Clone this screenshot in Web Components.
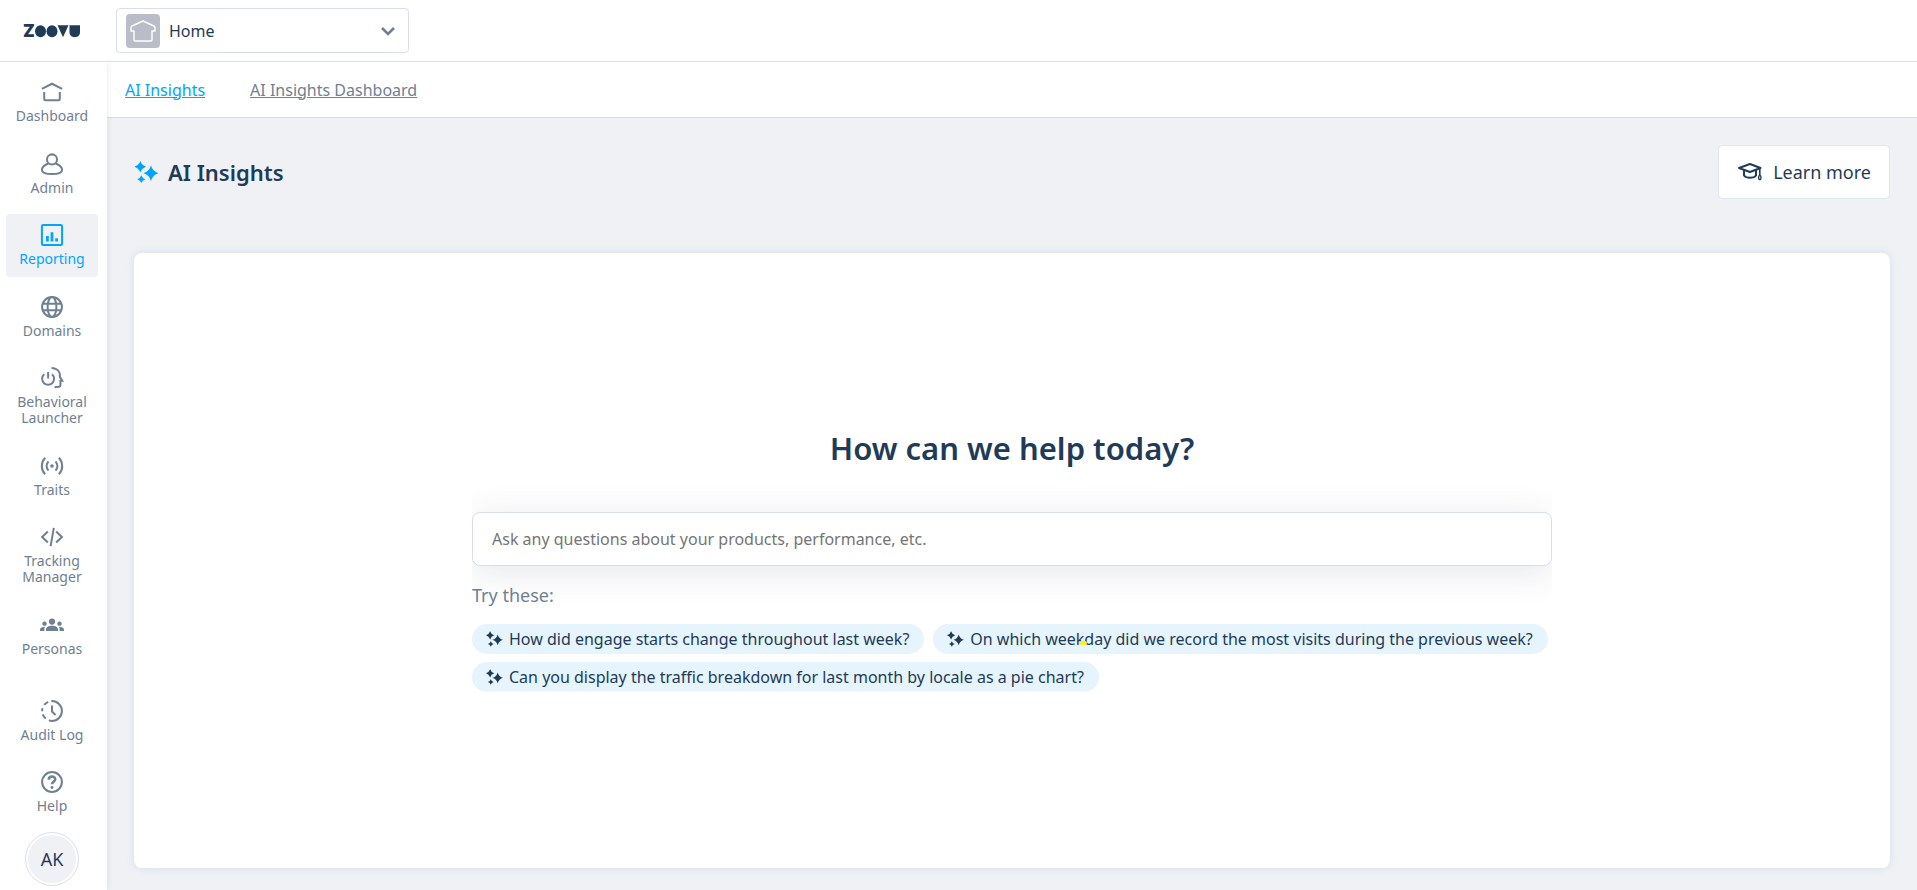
<!DOCTYPE html>
<html lang="en">
<head>
<meta charset="utf-8">
<title>AI Insights</title>
<style>
  html {
    --ink: #1f3b57;
    --muted: #6f8093;
    --accent: #00a5ff;
    --line: #dadeea;
    --surface: #eff1f5;
    --chip: #e5f4fd;
  }
  body {
    margin: 0;
    font-family: "Noto Sans", "Open Sans", sans-serif;
    font-size: 16px;
    color: var(--ink);
  }
</style>
</head>
<body>
<app-shell>
  <top-bar slot="header"></top-bar>
  <side-nav slot="nav">
    <nav-item icon="home">Dashboard</nav-item>
    <nav-item icon="user">Admin</nav-item>
    <nav-item icon="chart" active>Reporting</nav-item>
    <nav-item icon="globe">Domains</nav-item>
    <nav-item icon="launcher">Behavioral Launcher</nav-item>
    <nav-item icon="signal">Traits</nav-item>
    <nav-item icon="code">Tracking Manager</nav-item>
    <nav-item icon="group">Personas</nav-item>
    <nav-item slot="bottom" icon="clock">Audit Log</nav-item>
    <nav-item slot="bottom" icon="help">Help</nav-item>
    <user-avatar slot="bottom">AK</user-avatar>
  </side-nav>
  <tab-bar>
    <tab-link active>AI Insights</tab-link>
    <tab-link>AI Insights Dashboard</tab-link>
  </tab-bar>
  <page-title>AI Insights
    <learn-button slot="action">Learn more</learn-button>
  </page-title>
  <ask-card heading="How can we help today?">
    <prompt-chip>How did engage starts change throughout last week?</prompt-chip>
    <prompt-chip marked>On which weekday did we record the most visits during the previous week?</prompt-chip>
    <prompt-chip>Can you display the traffic breakdown for last month by locale as a pie chart?</prompt-chip>
  </ask-card>
</app-shell>

<script>
const icons = {
  home: '<path d="M1 8.500 12 3l11 5.500M3.500 12v7.500q0 1.500 1.500 1.500h14q1.500 0 1.500-1.500V12"/>',
  user: '<circle cx="12" cy="7" r="5.500"/><path d="M8 11.500c-4 1.500-7 4-7 7 0 3 4.500 4.500 11 4.500s11-1.500 11-4.500c0-3-3-5.500-7-7"/>',
  chart: '<rect x="1" y="1" width="22" height="22" rx="1.500"/><path stroke-width="3" d="M7 13v6M12 9v10M17 15.500V19"/>',
  globe: '<circle cx="12" cy="12" r="10.800"/><ellipse cx="12" cy="12" rx="4.800" ry="10.800"/><path d="M2 8.500h20M2 15.500h20"/>',
  launcher: '<path d="M3.500 8a6.500 6.500 0 1 0 8.500 0M7.800 5.500v7M11.500 1c5 0 8.500 3 9 6.500l.2 3.500 2.500 4h-2v5q0 1.500-1.500 1.500l-5 .5"/>',
  signal: '<circle cx="12" cy="12" r="2" fill="currentColor" stroke="none"/><path d="M8.200 7a7 7 0 0 0 0 10M15.800 7a7 7 0 0 1 0 10M4.500 3a13 13 0 0 0 0 18M19.500 3a13 13 0 0 1 0 18"/>',
  code: '<path d="M7.500 6 1.200 12l6.300 6M16.500 6l6.300 6-6.300 6M14 2l-3.500 20"/>',
  group: '<g fill="currentColor" stroke="none"><circle cx="12" cy="8.300" r="3.400"/><circle cx="3.800" cy="10.500" r="2.400"/><circle cx="20.200" cy="10.500" r="2.400"/><path d="M5.500 18.500v-2c0-2 2.500-3.700 6.500-3.700s6.500 1.700 6.500 3.700v2zM-1 18.500v-1.800c0-1.700 2-2.900 5.400-2.900-.5.800-.7 1.800-.7 2.700v2zM25 18.500v-1.800c0-1.700-2-2.900-5.400-2.900.5.800.7 1.800.7 2.700v2z"/></g>',
  clock: '<path d="M12 1.200a10.800 10.800 0 0 1 0 21.600"/><path d="M12 22.800a10.800 10.800 0 0 1 0-21.600" stroke-dasharray="3.500 4 5.500 3.500"/><path d="M12 6v6.500l3.800 3.800"/>',
  help: '<circle cx="12" cy="12" r="10.800"/><path stroke-width="2.800" d="M8.500 9.500c0-4.500 7-4.500 7-.5 0 2.800-3.500 2.600-3.500 5.500"/><circle cx="12" cy="18" r="1.600" fill="currentColor" stroke="none"/>'
};

const sparkle = `<svg viewBox="0 0 24 22" fill="currentColor" aria-hidden="true">
  <path d="M16.500 4.500q1.700 6 7.500 7.700-5.800 1.700-7.500 7.700-1.700-6-7.500-7.700 5.800-1.700 7.500-7.700zM5.800 0q1.400 4.300 5.800 5.800-4.400 1.400-5.800 5.800Q4.300 7.200 0 5.800 4.300 4.300 5.800 0zM6.800 14.300q1 3 4 3.900-3 .9-4 3.800-1-2.900-4-3.800 3-.9 4-3.900z"/>
</svg>`;

// shared base: clones the class template into an open shadow root
class BaseElement extends HTMLElement {
  constructor() {
    super();
    const tpl = document.createElement('template');
    tpl.innerHTML = this.constructor.html;
    this.attachShadow({mode: 'open'});
    this.shadowRoot.appendChild(tpl.content.cloneNode(true));
  }
}

class AppShell extends BaseElement {
  static html = `
    <style>
      :host {
        display: grid;
        grid-template-columns: 107px minmax(0, 1fr);
        grid-template-rows: auto 1fr;
        min-height: 100vh;
      }
      header { grid-column: 1 / -1; }
      aside {
        display: flex;
        background: #fff;
        box-shadow: 0 0 6px rgba(40, 60, 110, .12);
        clip-path: inset(0 -8px 0 0);
        z-index: 1;
      }
      main {
        display: flex;
        flex-direction: column;
        background: var(--surface);
      }
    </style>
    <header><slot name="header"></slot></header>
    <aside><slot name="nav"></slot></aside>
    <main><slot></slot></main>`;
}

class TopBar extends BaseElement {
  static html = `
    <style>
      :host {
        display: flex;
        align-items: center;
        gap: 32px;
        height: 61px;
        padding-left: 22px;
        background: #fff;
        border-bottom: 1px solid var(--line);
      }
      .logo { width: 62px; height: 24px; }
      .logo text { font: 900 17px Inter, sans-serif; }
      .picker {
        display: grid;
        grid-template-columns: 34px 1fr 16px;
        align-items: center;
        gap: 9px;
        box-sizing: border-box;
        width: 293px;
        height: 45px;
        padding: 0 12px 0 9px;
        border: 1px solid var(--line);
        border-radius: 4px;
      }
      .tile {
        display: flex;
        align-items: center;
        justify-content: center;
        height: 34px;
        border-radius: 4px;
        background: #b9bdc7;
      }
      select {
        appearance: none;
        width: 100%;
        height: 32px;
        padding: 0;
        border: 0;
        background: none;
        font: inherit;
        color: inherit;
      }
    </style>
    <svg class="logo" viewBox="-2 -6 62 24" fill="#1f3b57" role="img" aria-label="zoovu">
      <text x="-1" y="12">Z</text>
      <ellipse cx="16.500" cy="6.200" rx="5.500" ry="6"/>
      <ellipse cx="28" cy="6.200" rx="5.500" ry="6"/>
      <path d="M33.500.2h11L39 12.200z"/>
      <path d="M45.500.2h10.500V7c0 3.300-2 5.200-5.200 5.200S45.500 10.300 45.500 7z"/>
    </svg>
    <label class="picker">
      <span class="tile">
        <svg width="26" height="22" viewBox="0 0 26 22" fill="none" stroke="#fff" stroke-width="1.400" stroke-linejoin="round" aria-hidden="true">
          <path d="M13 1 2 6q-1 .5-1 1.500V11h3v9q0 1 1 1h16q1 0 1-1v-9h3V7.500Q25 6.500 24 6z"/>
        </svg>
      </span>
      <select aria-label="Page"><option>Home</option></select>
      <svg width="16" height="16" viewBox="0 0 16 16" fill="none" stroke="#6f8093" stroke-width="2.600" aria-hidden="true"><path d="M2 5l6 6 6-6"/></svg>
    </label>`;
}

class SideNav extends BaseElement {
  static html = `
    <style>
      :host {
        display: flex;
        flex: 1;
        box-sizing: border-box;
        padding: 9px 9px 4px 6px;
      }
      nav {
        display: flex;
        flex: 1;
        flex-direction: column;
        gap: 23px;
      }
      .top {
        display: flex;
        flex: 1;
        flex-direction: column;
        justify-content: space-between;
      }
      .bottom {
        display: flex;
        flex-direction: column;
        gap: 8px;
      }
    </style>
    <nav>
      <div class="top"><slot></slot></div>
      <div class="bottom"><slot name="bottom"></slot></div>
    </nav>`;
}

class NavItem extends BaseElement {
  static html = `
    <style>
      :host { display: block; color: var(--muted); }
      :host([active]) { color: var(--accent); }
      a {
        display: flex;
        flex-direction: column;
        align-items: center;
        gap: 5px;
        padding: 10px 8px;
        border-radius: 4px;
        font-size: 14px;
        line-height: 16px;
        text-align: center;
        text-decoration: none;
        color: inherit;
      }
      :host([active]) a { background: var(--surface); }
      svg {
        width: 22px;
        height: 22px;
        overflow: visible;
        fill: none;
        stroke: currentColor;
        stroke-width: 2.200;
      }
    </style>
    <a href="#"><svg viewBox="0 0 24 24" aria-hidden="true"></svg><span><slot></slot></span></a>`;

  connectedCallback() {
    this.shadowRoot.querySelector('svg').innerHTML = icons[this.getAttribute('icon')];
    if (this.hasAttribute('active')) {
      this.shadowRoot.querySelector('a').setAttribute('aria-current', 'page');
    }
  }
}

class UserAvatar extends BaseElement {
  static html = `
    <style>
      :host { display: flex; justify-content: center; }
      button {
        box-sizing: border-box;
        width: 54px;
        height: 54px;
        padding: 2px;
        border: 1px solid var(--line);
        border-radius: 50%;
        background: var(--surface) content-box;
        font: inherit;
        font-size: 18px;
        color: inherit;
      }
    </style>
    <button type="button"><slot></slot></button>`;
}

class TabBar extends BaseElement {
  static html = `
    <style>
      :host {
        display: block;
        background: #fff;
        border-bottom: 1px solid var(--line);
      }
      nav {
        display: flex;
        align-items: center;
        gap: 45px;
        height: 55px;
        padding-left: 18px;
      }
    </style>
    <nav><slot></slot></nav>`;
}

class TabLink extends BaseElement {
  static html = `
    <style>
      :host { display: block; color: var(--muted); }
      :host([active]) { color: var(--accent); }
      a { color: inherit; }
    </style>
    <a href="#"><slot></slot></a>`;
}

class PageTitle extends BaseElement {
  static html = `
    <style>
      :host {
        display: flex;
        align-items: center;
        justify-content: space-between;
        padding: 27px 27px 0;
      }
      h1 {
        display: flex;
        align-items: center;
        gap: 9px;
        margin: 0;
        font-size: 22px;
        font-weight: 600;
        line-height: 32px;
      }
      svg { width: 25px; height: 22px; color: var(--accent); }
    </style>
    <h1>${sparkle}<span><slot></slot></span></h1>
    <slot name="action"></slot>`;
}

class LearnButton extends BaseElement {
  static html = `
    <style>
      :host { display: block; }
      button {
        display: flex;
        align-items: center;
        gap: 11px;
        height: 54px;
        padding: 0 18px 0 19px;
        border: 1px solid #e2e6ee;
        border-radius: 4px;
        background: #fff;
        font: inherit;
        font-size: 18px;
        color: var(--ink);
      }
    </style>
    <button type="button">
      <svg width="24" height="20" viewBox="0 0 24 20" fill="none" stroke="currentColor" stroke-width="2" stroke-linejoin="round" aria-hidden="true">
        <path d="M1 6 12 2l10.500 4L12 10zM6 8.500v5c2.300 3 9.700 3 12 0v-5"/>
        <path stroke-width="1.600" d="M21.800 6v7.500"/>
        <ellipse cx="21.800" cy="15.500" rx="1.200" ry="2" stroke-width="1.400"/>
      </svg>
      <slot></slot>
    </button>`;
}

class AskCard extends BaseElement {
  static html = `
    <style>
      :host {
        display: flex;
        flex: 1;
        flex-direction: column;
        align-items: center;
        justify-content: center;
        margin: 54px 27px 22px;
        padding: 24px 24px 28px;
        border-radius: 8px;
        background: #fff;
        box-shadow: 0 0 8px rgba(80, 110, 150, .15);
      }
      form {
        width: 100%;
        max-width: 1080px;
        clip-path: inset(0);
      }
      h2 {
        margin: 0 0 42px;
        font-size: 31px;
        font-weight: 600;
        line-height: 44px;
        text-align: center;
      }
      input {
        display: block;
        box-sizing: border-box;
        width: 100%;
        height: 54px;
        padding: 0 19px;
        border: 1px solid var(--line);
        border-radius: 8px;
        box-shadow: 0 6px 36px rgba(40, 60, 80, .12);
        background: #fff;
        font: inherit;
        color: inherit;
      }
      input::placeholder { color: #757575; }
      p {
        position: relative;
        margin: 17px 0;
        font-size: 18px;
        line-height: 24px;
        color: var(--muted);
      }
      .chips {
        display: flex;
        flex-wrap: wrap;
        gap: 8px 9px;
      }
    </style>
    <form>
      <h2></h2>
      <input type="text" aria-label="Question" placeholder="Ask any questions about your products, performance, etc.">
      <p>Try these:</p>
      <div class="chips"><slot></slot></div>
    </form>`;

  connectedCallback() {
    this.shadowRoot.querySelector('h2').textContent = this.getAttribute('heading');
  }
}

class PromptChip extends BaseElement {
  static html = `
    <style>
      :host { display: block; position: relative; }
      button {
        display: flex;
        align-items: center;
        gap: 6px;
        height: 30px;
        padding: 0 15px 0 14px;
        border: 0;
        border-radius: 15px;
        background: var(--chip);
        font: inherit;
        color: var(--ink);
      }
      svg { width: 17px; height: 16px; }
      i { display: none; }
      :host([marked]) i {
        display: block;
        position: absolute;
        top: 17px;
        left: 146px;
        width: 8px;
        height: 4px;
        border-radius: 2px;
        background: #fff11c;
      }
    </style>
    <button type="button">${sparkle}<span><slot></slot></span></button><i></i>`;
}

customElements.define('app-shell', AppShell);
customElements.define('top-bar', TopBar);
customElements.define('side-nav', SideNav);
customElements.define('nav-item', NavItem);
customElements.define('user-avatar', UserAvatar);
customElements.define('tab-bar', TabBar);
customElements.define('tab-link', TabLink);
customElements.define('page-title', PageTitle);
customElements.define('learn-button', LearnButton);
customElements.define('ask-card', AskCard);
customElements.define('prompt-chip', PromptChip);
</script>
</body>
</html>
